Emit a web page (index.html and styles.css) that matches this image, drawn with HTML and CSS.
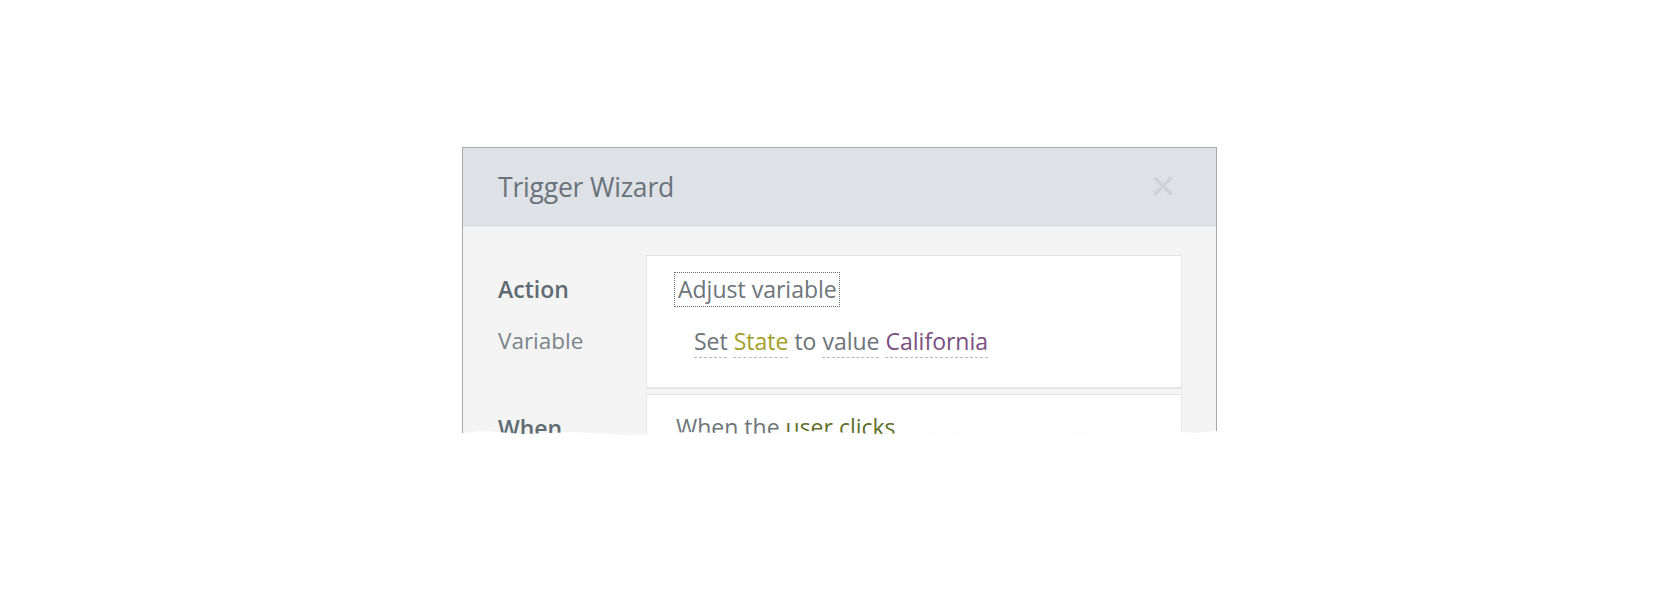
FILE: index.html
```html
<!DOCTYPE html>
<html>
<head>
<meta charset="utf-8">
<link rel="stylesheet" href="styles.css">
</head>
<body>
<div class="page">
  <div class="dialog">
    <div class="header">
      <span class="title">Trigger Wizard</span>
      <span class="close" aria-label="close">
        <svg width="22" height="22" viewBox="0 0 22 22"><path d="M3.5 3.5 L18.5 18.5 M18.5 3.5 L3.5 18.5" stroke="#cfd2d6" stroke-width="3.5" stroke-linecap="round"/></svg>
      </span>
    </div>
    <div class="body">
      <div class="section">
        <div class="labels">
          <div class="label strong">Action</div>
          <div class="label sub">Variable</div>
        </div>
        <div class="box">
          <div class="row1"><span class="focus">Adjust variable</span></div>
          <div class="row2">
            <span class="u">Set</span> <span class="u state">State</span> to <span class="u">value</span> <span class="u cal">California</span>
          </div>
        </div>
      </div>
      <div class="section second">
        <div class="labels l2">
          <div class="label strong">When</div>
        </div>
        <div class="box box2">
          <div class="row3">When the <span class="green">user clicks</span></div>
        </div>
      </div>
    </div>
  </div>
</div>
</body>
</html>
```
FILE: styles.css
```css
html, body {
  margin: 0;
  padding: 0;
  background: #ffffff;
}
body {
  font-family: "Open Sans", "Noto Sans", sans-serif;
}
.page {
  padding: 147px 0 0 462px;
}
.dialog {
  width: 753px;
  height: 290px;
  border: 1px solid #a9a9a9;
  border-bottom: none;
  background: #f4f4f4;
  overflow: hidden;
  clip-path: polygon(0 0, 100% 0, 100% 284px, 97% 286px, 93% 283px, 88% 287px, 80% 285px, 72% 288px, 64% 285px, 55% 287px, 46% 284px, 38% 287px, 30% 285px, 22% 288px, 15% 285px, 8% 287px, 3% 284px, 0 286px);
}
.header {
  height: 78px;
  background: #dee1e5;
  display: flex;
  align-items: center;
  justify-content: space-between;
  padding: 0 42px 0 35px;
  border-bottom: 1px solid #e6e8eb;
}
.title {
  font-size: 26.5px;
  color: #6a737b;
  letter-spacing: -0.2px;
}
.close {
  display: flex;
  margin-top: -3px;
}
.body {
  padding: 28px 34px 0 35px;
}
.section {
  display: flex;
}
.labels {
  width: 148px;
  flex: none;
  padding-top: 19px;
}
.label {
  line-height: 30px;
  font-size: 22.5px;
}
.strong {
  font-weight: 600;
  color: #5f6a72;
  font-size: 23px;
}
.sub {
  color: #7b848b;
  margin-top: 22px;
}
.box {
  flex: 1;
  background: #ffffff;
  border: 1px solid #e6e6e6;
  border-bottom: 2px solid #e4e4e4;
  padding: 16px 27px 31px;
  font-size: 23px;
  color: #6d747a;
}
.row1 {
  line-height: 29px;
}
.focus {
  display: inline-block;
  border: 1px dotted #6b6b6b;
  padding: 2px 2px 2px 3px;
}
.row2 {
  margin-top: 19px;
  line-height: 30px;
  padding-left: 20px;
}
.u {
  text-decoration: underline dashed #b9b9b9;
  text-decoration-thickness: 1px;
  text-underline-offset: 7px;
}
.state {
  color: #a4a02c;
}
.cal {
  color: #7a4f80;
}
.second {
  margin-top: 5px;
}
.l2 {
  padding-top: 19px;
}
.box2 {
  padding-top: 17px;
  height: 100px;
}
.row3 {
  line-height: 30px;
  padding-left: 2px;
}
.green {
  color: #5f6f2a;
}
```
